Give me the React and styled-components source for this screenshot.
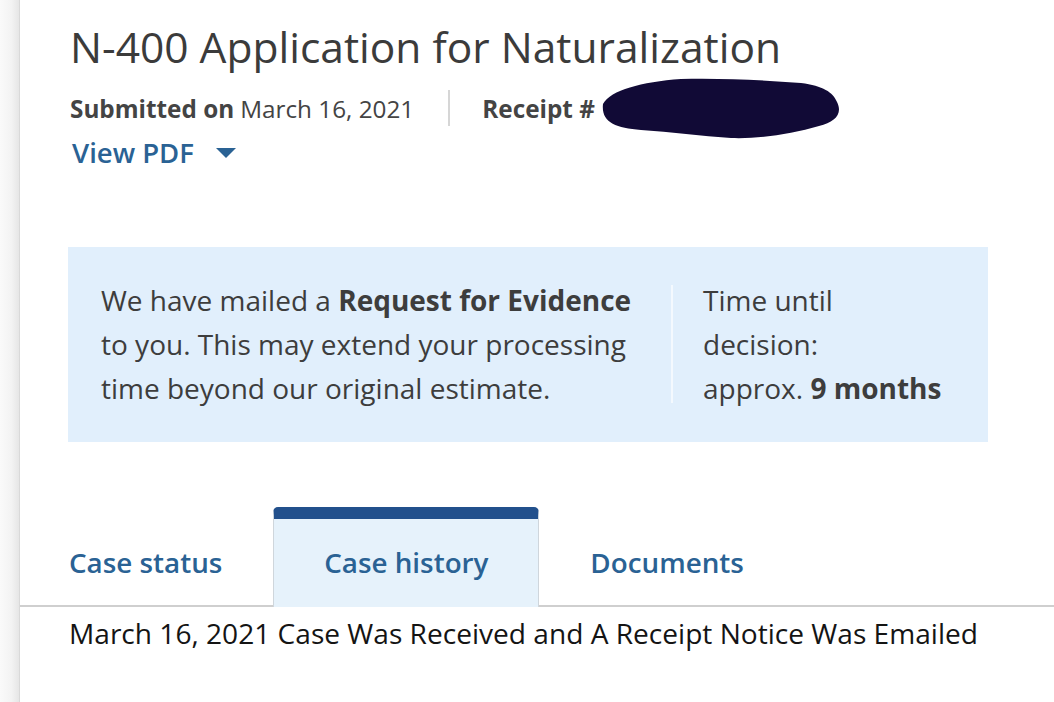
import React from "react";
import styled, { createGlobalStyle } from "styled-components";

const GlobalStyle = createGlobalStyle`
  html, body {
    margin: 0;
    padding: 0;
    background: #fff;
  }
  body {
    font-family: "Open Sans", "Lato", sans-serif;
    color: #3d3d3d;
  }
`;

const Page = styled.div`
  display: flex;
  min-height: 702px;
  width: 1054px;
  overflow: hidden;
`;

const Edge = styled.div`
  width: 19px;
  flex: 0 0 19px;
  background: linear-gradient(to right, #fafafa 0%, #f3f3f3 60%, #e6e6e6 100%);
  border-right: 1px solid #d9d9d9;
`;

const Main = styled.main`
  flex: 1;
  display: flex;
  flex-direction: column;
`;

const Header = styled.header`
  padding: 21px 0 0 50px;
`;

const Title = styled.h1`
  margin: 0;
  font-size: 42.5px;
  font-weight: 400;
  line-height: 52px;
  color: #3b3b3b;
`;

const MetaRow = styled.div`
  display: flex;
  align-items: center;
  margin-top: 15px;
  height: 40px;
  font-size: 24.3px;
  color: #444;
`;

const MetaItem = styled.span`
  display: inline-flex;
  align-items: center;
  b {
    font-weight: 700;
    margin-right: 6px;
  }
`;

const Divider = styled.span`
  width: 2px;
  height: 36px;
  background: #d6d6d6;
  margin: 0 32px 0 34px;
`;

const Blob = styled.svg`
  width: 240px;
  height: 62px;
  margin-top: 2px;
`;

const PdfLink = styled.a`
  display: inline-flex;
  align-items: center;
  gap: 22px;
  margin-top: 6px;
  margin-left: 2px;
  font-size: 27.5px;
  font-weight: 600;
  color: #2a6294;
  text-decoration: none;
  cursor: pointer;
`;

const Caret = styled.span`
  width: 0;
  height: 0;
  border-left: 10px solid transparent;
  border-right: 10px solid transparent;
  border-top: 10px solid #2a6294;
`;

const Notice = styled.section`
  margin: 76px 0 0 48px;
  width: 920px;
  height: 195px;
  box-sizing: border-box;
  background: #e1effc;
  display: flex;
  align-items: center;
  padding: 0 0 2px 33px;
  font-size: 28px;
  line-height: 44px;
  color: #3d3d3d;
`;

const NoticeText = styled.p`
  margin: 0;
  width: 548px;
  b {
    font-weight: 700;
  }
`;

const NoticeRule = styled.span`
  align-self: center;
  width: 2px;
  height: 118px;
  background: #f4f9fe;
  margin: 0 30px 0 22px;
`;

const Estimate = styled.p`
  margin: 0;
  b {
    font-weight: 700;
  }
`;

const Tabs = styled.nav`
  margin-top: 65px;
  display: flex;
  align-items: flex-end;
  gap: 50px;
  border-bottom: 2px solid #cfcfcf;
  height: 100px;
  box-sizing: border-box;
  padding-left: 48px;
`;

const Tab = styled.button`
  height: 100px;
  margin-bottom: -2px;
  box-sizing: border-box;
  width: ${(p) => (p.$active ? "266px" : "auto")};
  padding: 0 0 3px;
  background: ${(p) => (p.$active ? "#e6f2fb" : "transparent")};
  border: 1px solid ${(p) => (p.$active ? "#cfd6dc" : "transparent")};
  border-top: 12px solid ${(p) => (p.$active ? "#22508c" : "transparent")};
  border-bottom: none;
  border-radius: 5px 5px 0 0;
  font-family: inherit;
  font-size: 27.8px;
  font-weight: 600;
  color: #2a6294;
  cursor: pointer;
  display: flex;
  align-items: center;
  justify-content: center;
`;

const History = styled.p`
  margin: 8px 0 0 49px;
  font-size: 28.1px;
  line-height: 36px;
  color: #141414;
`;

export default function App() {
  return (
    <>
      <GlobalStyle />
      <Page>
        <Edge />
        <Main>
          <Header>
            <Title>N-400 Application for Naturalization</Title>
            <MetaRow>
              <MetaItem>
                <b>Submitted on</b> March 16, 2021
              </MetaItem>
              <Divider />
              <MetaItem>
                <b>Receipt #</b>
                <Blob viewBox="0 0 240 62" aria-hidden="true">
                  <path
                    d="M2 26 C 10 12, 40 4, 80 1 C 120 0, 160 2, 200 5 C 222 8, 232 14, 236 24 C 242 36, 234 44, 218 48 C 190 56, 160 61, 130 60 C 100 58, 70 54, 40 52 C 14 50, 0 44, 2 26 Z"
                    fill="#110a36"
                  />
                </Blob>
              </MetaItem>
            </MetaRow>
            <PdfLink>
              View PDF <Caret />
            </PdfLink>
          </Header>
          <Notice>
            <NoticeText>
              We have mailed a <b>Request for Evidence</b> to you. This may
              extend your processing time beyond our original estimate.
            </NoticeText>
            <NoticeRule />
            <Estimate>
              Time until
              <br />
              decision:
              <br />
              approx. <b>9 months</b>
            </Estimate>
          </Notice>
          <Tabs>
            <Tab>Case status</Tab>
            <Tab $active>Case history</Tab>
            <Tab>Documents</Tab>
          </Tabs>
          <History>
            March 16, 2021 Case Was Received and A Receipt Notice Was Emailed
          </History>
        </Main>
      </Page>
    </>
  );
}
